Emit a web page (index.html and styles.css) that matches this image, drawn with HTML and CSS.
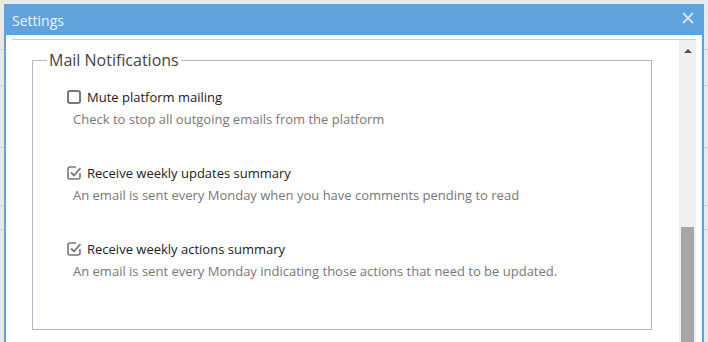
FILE: index.html
```html
<!DOCTYPE html>
<html>
<head>
<meta charset="utf-8">
<link rel="stylesheet" href="styles.css">
</head>
<body>
<div class="page">
  <div class="bg-lines"></div>
  <div class="dialog">
    <div class="titlebar">
      <span class="title">Settings</span>
      <span class="close">
        <svg width="12" height="12" viewBox="0 0 12 12"><path d="M1 1L11 11M11 1L1 11" stroke="#cfe2f5" stroke-width="2"/></svg>
      </span>
    </div>
    <div class="body">
      <div class="scroller">
        <div class="content">
          <fieldset class="group">
            <legend>Mail Notifications</legend>
            <div class="option">
              <div class="option-row">
                <svg class="cb" width="14" height="14" viewBox="0 0 14 14"><rect x="1" y="1" width="12" height="12" rx="2" fill="none" stroke="#777" stroke-width="2"/></svg>
                <span class="label">Mute platform mailing</span>
              </div>
              <div class="desc">Check to stop all outgoing emails from the platform</div>
            </div>
            <div class="option">
              <div class="option-row">
                <svg class="cb" width="14" height="14" viewBox="0 0 14 14"><path d="M9 1H3Q1 1 1 3V11Q1 13 3 13H11Q13 13 13 11V7" fill="none" stroke="#777" stroke-width="1.6"/><path d="M4 6.5L7 9.5L13.5 2" fill="none" stroke="#777" stroke-width="1.8"/></svg>
                <span class="label">Receive weekly updates summary</span>
              </div>
              <div class="desc">An email is sent every Monday when you have comments pending to read</div>
            </div>
            <div class="option">
              <div class="option-row">
                <svg class="cb" width="14" height="14" viewBox="0 0 14 14"><path d="M9 1H3Q1 1 1 3V11Q1 13 3 13H11Q13 13 13 11V7" fill="none" stroke="#777" stroke-width="1.6"/><path d="M4 6.5L7 9.5L13.5 2" fill="none" stroke="#777" stroke-width="1.8"/></svg>
                <span class="label">Receive weekly actions summary</span>
              </div>
              <div class="desc">An email is sent every Monday indicating those actions that need to be updated.</div>
            </div>
          </fieldset>
        </div>
        <div class="scrollbar">
          <div class="arrow"></div>
          <div class="thumb"></div>
        </div>
      </div>
    </div>
  </div>
</div>
</body>
</html>
```
FILE: styles.css
```css
html, body {
  margin: 0;
  padding: 0;
  height: 100%;
  overflow: hidden;
}
body {
  background: #e9e9e9;
  font-family: "Open Sans", "Liberation Sans", sans-serif;
}
.page {
  position: relative;
  height: 342px;
  padding: 4px 4px 0 4px;
  box-sizing: border-box;
}
.bg-lines {
  position: absolute;
  inset: 0;
  background:
    linear-gradient(#cfcfcf, #cfcfcf) 0 85px / 100% 1px no-repeat,
    linear-gradient(#cfcfcf, #cfcfcf) 0 147px / 100% 1px no-repeat,
    linear-gradient(#cfcfcf, #cfcfcf) 0 205px / 100% 1px no-repeat,
    linear-gradient(#cfcfcf, #cfcfcf) 0 229px / 100% 1px no-repeat,
    linear-gradient(#cfcfcf, #cfcfcf) 0 49px / 100% 1px no-repeat;
}
.dialog {
  position: relative;
  width: 700px;
  height: 338px;
  background: #5fa3dd;
  padding: 0 2px;
  box-sizing: border-box;
  display: flex;
  flex-direction: column;
}
.titlebar {
  height: 31px;
  display: flex;
  align-items: center;
  justify-content: space-between;
  padding: 2px 8px 0 6px;
  box-sizing: border-box;
}
.title {
  color: #eef5fc;
  font-size: 14px;
}
.close {
  display: flex;
  margin-top: -6px;
}
.body {
  flex: 1;
  background: #fff;
  padding: 4px 6px 0 6px;
  display: flex;
  min-height: 0;
}
.scroller {
  flex: 1;
  border-top: 1px solid #cccccc;
  display: flex;
  min-height: 0;
}
.content {
  flex: 1;
  padding: 9px 27px 0 20px;
}
.scrollbar {
  width: 17px;
  background: #f0f0f0;
  display: flex;
  flex-direction: column;
  align-items: center;
}
.arrow {
  margin-top: 9px;
  width: 0;
  height: 0;
  border-left: 4px solid transparent;
  border-right: 4px solid transparent;
  border-bottom: 4px solid #505050;
}
.thumb {
  margin-top: 174px;
  width: 13px;
  flex: 1;
  background: #a6a6a6;
}
.group {
  margin: 0;
  border: 1px solid #b5b5c8;
  padding: 15px 0 0 34px;
  height: 281px;
  box-sizing: border-box;
}
.group legend {
  font-size: 16px;
  color: #444;
  padding: 0 2px;
  margin-left: -20px;
  line-height: 23px;
}
.option {
  margin-bottom: 34px;
}
.option-row {
  display: flex;
  align-items: center;
  gap: 6px;
  height: 20px;
}
.cb {
  display: block;
}
.label {
  font-size: 13px;
  color: #222;
}
.desc {
  font-size: 13px;
  color: #777;
  margin: 3px 0 0 6px;
  line-height: 19px;
}
```
